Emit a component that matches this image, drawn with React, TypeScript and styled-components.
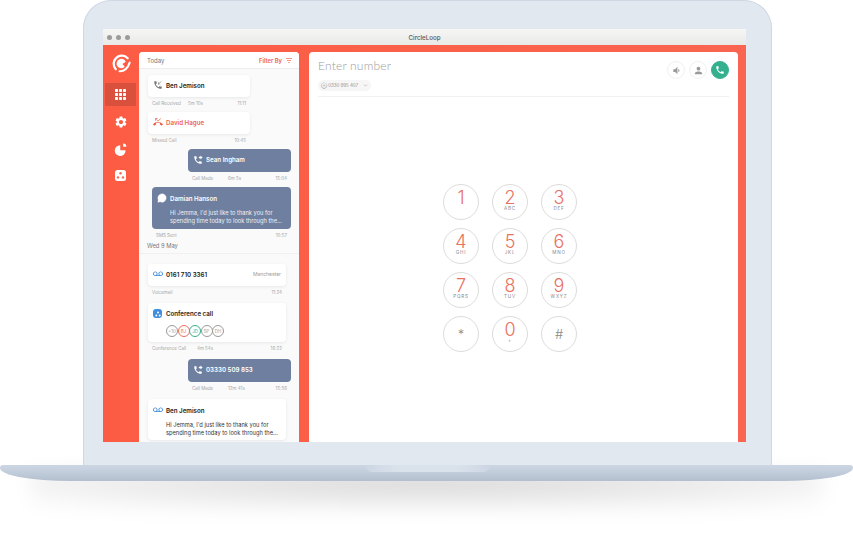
import styled, { createGlobalStyle } from "styled-components";
import { ChevronDown, MessageCircle } from "lucide-react";
import {
  MdPhone,
  MdPhoneCallback,
  MdPhoneMissed,
  MdPhoneForwarded,
  MdVoicemail,
  MdVolumeDown,
  MdPerson,
  MdSettings,
} from "react-icons/md";

const GlobalStyle = createGlobalStyle`
  html, body {
    margin: 0;
    padding: 0;
    background: #fff;
    font-family: "Inter", "Liberation Sans", sans-serif;
  }
  * { box-sizing: border-box; }
`;

const Page = styled.div`
  width: 853px;
  height: 533px;
  overflow: hidden;
  background: #fff;
  isolation: isolate;
`;

const Lid = styled.div`
  width: 689px;
  height: 465px;
  margin-left: 83px;
  padding: 28px 25px 23px 19px;
  background: #e2e8f0;
  border: 1.5px solid #cfd7e3;
  border-bottom: 0;
  border-radius: 28px 28px 0 0;
`;

const Screen = styled.div`
  height: 100%;
  display: flex;
  flex-direction: column;
`;

const TitleBar = styled.div`
  position: relative;
  height: 16px;
  flex: none;
  display: flex;
  align-items: center;
  justify-content: center;
  background: linear-gradient(#f6f6f4, #e9e9e7);
  font-size: 6.2px;
  font-weight: 500;
  color: #555;
`;

const Dots = styled.div`
  position: absolute;
  left: 4px;
  top: 6px;
  display: flex;
  gap: 4px;
`;

const Dot = styled.span`
  width: 5px;
  height: 5px;
  border-radius: 50%;
  background: #9b9b9b;
`;

const Body = styled.div`
  flex: 1;
  min-height: 0;
  display: flex;
  background: linear-gradient(90deg, #fc5c43, #f96550);
  padding-top: 7px;
`;

const Sidebar = styled.div`
  width: 36px;
  flex: none;
  display: flex;
  flex-direction: column;
  align-items: stretch;
`;

const LogoWrap = styled.div`
  height: 29px;
  padding-top: 2px;
  display: flex;
  justify-content: center;
  color: #fff;
`;

const NavItem = styled.div<{ $active?: boolean }>`
  height: 23px;
  margin: 2px 3px 2px 2px;
  display: flex;
  align-items: center;
  justify-content: center;
  background: ${(p) => (p.$active ? "#d9503c" : "transparent")};
  color: #fff;
`;

const ListPanel = styled.div`
  width: 160px;
  flex: none;
  margin-right: 10px;
  background: #fafafa;
  border-radius: 4px 4px 0 0;
  overflow: hidden;
`;

const ListHeader = styled.div`
  height: 17px;
  padding: 0 7px 0 8px;
  display: flex;
  align-items: center;
  justify-content: space-between;
  background: #fff;
  border-bottom: 1px solid #eeeeee;
  font-size: 6px;
  color: #777;
`;

const FilterBy = styled.span`
  display: flex;
  align-items: center;
  gap: 4px;
  color: #f0614c;
  font-weight: 600;
  font-size: 5.8px;
`;

const Messages = styled.div`
  padding: 6px 8px 0 9px;
`;

const Group = styled.div<{ $width: number; $right?: boolean; $gap?: number }>`
  width: ${(p) => p.$width}px;
  margin-left: ${(p) => (p.$right ? "auto" : "0")};
  margin-bottom: ${(p) => p.$gap ?? 4}px;
`;

const Card = styled.div<{ $dark?: boolean; $height: number; $tall?: boolean }>`
  height: ${(p) => p.$height}px;
  padding: ${(p) => (p.$tall ? "6px 5px 0" : "0 5px 2px")};
  display: flex;
  flex-direction: column;
  justify-content: ${(p) => (p.$tall ? "flex-start" : "center")};
  border-radius: 4px;
  background: ${(p) => (p.$dark ? "#6e7f9f" : "#fff")};
  color: ${(p) => (p.$dark ? "#fff" : "#222")};
  box-shadow: ${(p) => (p.$dark ? "none" : "0 1px 3px rgba(60, 70, 90, 0.1)")};
`;

const CardTop = styled.div`
  display: flex;
  align-items: center;
  gap: 3px;
`;

const IconSlot = styled.span<{ $color?: string }>`
  width: 10px;
  height: 10px;
  flex: none;
  display: flex;
  align-items: center;
  justify-content: center;
  color: ${(p) => p.$color ?? "currentColor"};
`;

const Name = styled.span<{ $color?: string }>`
  flex: 1;
  font-size: 6.2px;
  font-weight: 600;
  color: ${(p) => p.$color ?? "inherit"};
  white-space: nowrap;
`;

const Place = styled.span`
  font-size: 5px;
  color: #9a9a9a;
`;

const Snippet = styled.div<{ $dark?: boolean }>`
  margin-top: 6px;
  padding-left: 13px;
  font-size: 5.7px;
  line-height: 8px;
  color: ${(p) => (p.$dark ? "#eef1f6" : "#333")};
  white-space: nowrap;
`;

const Meta = styled.div`
  height: 11px;
  padding: 2px 4px 0;
  display: flex;
  align-items: center;
  font-size: 4.5px;
  color: #a5a5a5;
`;

const MetaLabel = styled.span<{ $wide?: boolean }>`
  width: ${(p) => (p.$wide ? 45 : 36)}px;
  flex: none;
  white-space: nowrap;
`;

const MetaTime = styled.span`
  margin-left: auto;
`;

const DateRow = styled.div`
  height: 14px;
  margin: 0 -8px 10px -9px;
  padding: 0 0 2px 8px;
  display: flex;
  align-items: center;
  border-bottom: 1px solid #f0f0f0;
  font-size: 5.8px;
  color: #777;
`;

const Avatars = styled.div`
  display: flex;
  margin: 7px 0 0 13px;
`;

const Avatar = styled.span<{ $color: string }>`
  width: 12px;
  height: 12px;
  margin-right: -0.5px;
  display: flex;
  align-items: center;
  justify-content: center;
  border: 0.7px solid ${(p) => p.$color};
  border-radius: 50%;
  background: #fff;
  color: ${(p) => p.$color};
  font-size: 4.4px;
`;

const ConfBadge = styled.span`
  width: 9px;
  height: 9px;
  margin-right: 1px;
  flex: none;
  border-radius: 3px;
  background: #3f8ee0;
  display: flex;
  align-items: center;
  justify-content: center;
`;

const MainPanel = styled.div`
  width: 429px;
  flex: none;
  display: flex;
  flex-direction: column;
  background: #fff;
  border-radius: 4px 4px 0 0;
`;

const MainHeader = styled.div`
  height: 45px;
  flex: none;
  margin: 0 9px;
  padding-top: 6px;
  display: flex;
  justify-content: space-between;
  border-bottom: 1px solid #f1f1f1;
`;

const NumberTitle = styled.div`
  font-family: "Lato", sans-serif;
  font-weight: 300;
  font-size: 12px;
  line-height: 16px;
  letter-spacing: 0.2px;
  color: #9c9c9c;
`;

const NumberChip = styled.div`
  width: 53px;
  height: 11px;
  margin-top: 6px;
  padding: 0 3px;
  display: flex;
  align-items: center;
  justify-content: space-between;
  border-radius: 6px;
  background: #f6f6f6;
  font-size: 4.4px;
  color: #8b8b8b;
`;

const HeaderActions = styled.div`
  display: flex;
  gap: 4px;
  margin-top: 3px;
`;

const RoundButton = styled.div<{ $green?: boolean }>`
  width: 18px;
  height: 18px;
  display: flex;
  align-items: center;
  justify-content: center;
  border-radius: 50%;
  border: 1px solid ${(p) => (p.$green ? "#35b08f" : "#f1f1f1")};
  background: ${(p) => (p.$green ? "#35b08f" : "#fff")};
  color: ${(p) => (p.$green ? "#fff" : "#9a9a9a")};
`;

const DialArea = styled.div`
  flex: 1;
  padding: 87px 27px 0 0;
  display: flex;
  justify-content: center;
`;

const DialGrid = styled.div`
  display: grid;
  grid-template-columns: repeat(3, 36px);
  grid-auto-rows: 36px;
  gap: 8px 13px;
  height: 168px;
`;

const Key = styled.div`
  display: flex;
  flex-direction: column;
  align-items: center;
  justify-content: center;
  border: 1px solid #dcdcdc;
  border-radius: 50%;
`;

const Digit = styled.span<{ $muted?: boolean }>`
  font-weight: 300;
  font-size: ${(p) => (p.$muted ? 13 : 18)}px;
  line-height: ${(p) => (p.$muted ? 13 : 17)}px;
  color: ${(p) => (p.$muted ? "#888" : "#e9705f")};
`;

const Letters = styled.span`
  height: 6px;
  margin-bottom: 3px;
  font-size: 4.6px;
  line-height: 6px;
  letter-spacing: 0.8px;
  color: #8a8a8a;
`;

const Base = styled.div`
  position: relative;
  width: 853px;
  height: 16px;
  background: linear-gradient(#ccd6e3 0%, #c2cddc 45%, #b4bfce 100%);
  border-radius: 3px 3px 70px 70px / 3px 3px 13px 13px;

  /* soft shadow the laptop throws on the page */
  &::after {
    content: "";
    position: absolute;
    z-index: -1;
    left: 30px;
    right: 30px;
    top: 6px;
    height: 38px;
    background: radial-gradient(ellipse at 50% 0, rgba(0, 0, 0, 0.17), rgba(0, 0, 0, 0.05) 72%, rgba(0, 0, 0, 0));
    filter: blur(9px);
  }
`;

const Notch = styled.div`
  position: absolute;
  left: 365px;
  top: 0;
  width: 125px;
  height: 7px;
  background: linear-gradient(90deg, #ccd6e3, #d9e1eb 25%, #d9e1eb 75%, #ccd6e3);
  border-radius: 0 0 8px 8px;
`;

const keys = [
  ["1", ""],
  ["2", "ABC"],
  ["3", "DEF"],
  ["4", "GHI"],
  ["5", "JKL"],
  ["6", "MNO"],
  ["7", "PQRS"],
  ["8", "TUV"],
  ["9", "WXYZ"],
];

const people = [
  { label: "+10", color: "#9a9a9a" },
  { label: "BJ", color: "#e9705f" },
  { label: "JD", color: "#35b08f" },
  { label: "SP", color: "#9a9a9a" },
  { label: "DH", color: "#9a9a9a" },
];

const Logo = () => (
  <svg width="19" height="19" viewBox="0 0 20 20" fill="none" stroke="#fff" strokeLinecap="round">
    <path d="M16.5 4.5A8.4 8.4 0 1 0 4 16" strokeWidth="2.4" />
    <path d="M8 18.2C12.5 18.5 17 15 18.6 9" strokeWidth="2.2" />
    <path d="M14.5 8.2A5 5 0 1 0 13.5 13.5L11 10.5z" fill="#fff" stroke="none" />
  </svg>
);

const GridIcon = () => (
  <svg width="11" height="11" viewBox="0 0 11 11" fill="#fff">
    {[0, 4, 8].map((y) =>
      [0, 4, 8].map((x) => <rect key={`${x}-${y}`} x={x} y={y} width="3" height="3" rx="0.8" />),
    )}
  </svg>
);

const PieIcon = () => (
  <svg width="14" height="14" viewBox="0 0 13 13" fill="#fff">
    <path d="M5.8 3v4.6h4.9A5 5 0 1 1 5.8 3z" />
    <path d="M8.5 1.5a3 3 0 0 1 3 3h-3z" />
  </svg>
);

const DiceIcon = () => (
  <svg width="11" height="11" viewBox="0 0 11 11">
    <rect width="11" height="11" rx="2.5" fill="#fff" />
    <circle cx="5.5" cy="3.2" r="1.2" fill="#f96550" />
    <circle cx="3" cy="7.4" r="1.2" fill="#f96550" />
    <circle cx="8" cy="7.4" r="1.2" fill="#f96550" />
  </svg>
);

const FilterIcon = () => (
  <svg width="6" height="5" viewBox="0 0 6 5" stroke="#f0614c" strokeWidth="0.7">
    <path d="M0 .5h6M1 2.5h4M2.2 4.5h1.6" />
  </svg>
);

export default function App() {
  return (
    <Page>
      <GlobalStyle />
      <Lid>
        <Screen>
          <TitleBar>
            <Dots>
              <Dot />
              <Dot />
              <Dot />
            </Dots>
            CircleLoop
          </TitleBar>
          <Body>
            <Sidebar>
              <LogoWrap>
                <Logo />
              </LogoWrap>
              <NavItem $active>
                <GridIcon />
              </NavItem>
              <NavItem>
                <MdSettings size={14} />
              </NavItem>
              <NavItem>
                <PieIcon />
              </NavItem>
              <NavItem>
                <DiceIcon />
              </NavItem>
            </Sidebar>

            <ListPanel>
              <ListHeader>
                Today
                <FilterBy>
                  Filter By <FilterIcon />
                </FilterBy>
              </ListHeader>
              <Messages>
                <Group $width={102}>
                  <Card $height={22}>
                    <CardTop>
                      <IconSlot $color="#777">
                        <MdPhoneCallback size={10} />
                      </IconSlot>
                      <Name>Ben Jemison</Name>
                    </CardTop>
                  </Card>
                  <Meta>
                    <MetaLabel>Call Received</MetaLabel>5m 10s<MetaTime>11:11</MetaTime>
                  </Meta>
                </Group>
                <Group $width={102}>
                  <Card $height={22}>
                    <CardTop>
                      <IconSlot $color="#f0614c">
                        <MdPhoneMissed size={10} />
                      </IconSlot>
                      <Name $color="#ee6552">David Hague</Name>
                    </CardTop>
                  </Card>
                  <Meta>
                    <MetaLabel>Missed Call</MetaLabel>
                    <MetaTime>10:45</MetaTime>
                  </Meta>
                </Group>
                <Group $width={103} $right>
                  <Card $height={23} $dark>
                    <CardTop>
                      <IconSlot>
                        <MdPhoneForwarded size={10} />
                      </IconSlot>
                      <Name>Sean Ingham</Name>
                    </CardTop>
                  </Card>
                  <Meta>
                    <MetaLabel>Call Made</MetaLabel>6m 5s<MetaTime>15:04</MetaTime>
                  </Meta>
                </Group>
                <Group $width={139} $right $gap={0}>
                  <Card $height={42} $dark $tall>
                    <CardTop>
                      <IconSlot>
                        <MessageCircle size={10} fill="#fff" strokeWidth={1} />
                      </IconSlot>
                      <Name>Damian Hanson</Name>
                    </CardTop>
                    <Snippet $dark>
                      Hi Jemma, I'd just like to thank you for
                      <br />
                      spending time today to look through the...
                    </Snippet>
                  </Card>
                  <Meta>
                    <MetaLabel>SMS Sent</MetaLabel>
                    <MetaTime>10:57</MetaTime>
                  </Meta>
                </Group>
                <DateRow>Wed 9 May</DateRow>
                <Group $width={138} $gap={6}>
                  <Card $height={22}>
                    <CardTop>
                      <IconSlot $color="#3f8ee0">
                        <MdVoicemail size={10} />
                      </IconSlot>
                      <Name>0161 710 3361</Name>
                      <Place>Manchester</Place>
                    </CardTop>
                  </Card>
                  <Meta>
                    <MetaLabel>Voicemail</MetaLabel>
                    <MetaTime>11:24</MetaTime>
                  </Meta>
                </Group>
                <Group $width={138} $gap={6}>
                  <Card $height={39} $tall>
                    <CardTop>
                      <ConfBadge>
                        <svg width="6" height="6" viewBox="0 0 6 6" fill="#fff">
                          <circle cx="3" cy="1.4" r="1" />
                          <circle cx="1.3" cy="4.4" r="1" />
                          <circle cx="4.7" cy="4.4" r="1" />
                        </svg>
                      </ConfBadge>
                      <Name>Conference call</Name>
                    </CardTop>
                    <Avatars>
                      {people.map((person) => (
                        <Avatar key={person.label} $color={person.color}>
                          {person.label}
                        </Avatar>
                      ))}
                    </Avatars>
                  </Card>
                  <Meta>
                    <MetaLabel $wide>Conference Call</MetaLabel>4m 54s
                    <MetaTime>16:22</MetaTime>
                  </Meta>
                </Group>
                <Group $width={103} $right $gap={6}>
                  <Card $height={23} $dark>
                    <CardTop>
                      <IconSlot>
                        <MdPhoneForwarded size={10} />
                      </IconSlot>
                      <Name>03330 509 853</Name>
                    </CardTop>
                  </Card>
                  <Meta>
                    <MetaLabel>Call Made</MetaLabel>12m 41s<MetaTime>15:56</MetaTime>
                  </Meta>
                </Group>
                <Group $width={138}>
                  <Card $height={41} $tall>
                    <CardTop>
                      <IconSlot $color="#3f8ee0">
                        <MdVoicemail size={10} />
                      </IconSlot>
                      <Name>Ben Jemison</Name>
                    </CardTop>
                    <Snippet>
                      Hi Jemma, I'd just like to thank you for
                      <br />
                      spending time today to look through the...
                    </Snippet>
                  </Card>
                </Group>
              </Messages>
            </ListPanel>

            <MainPanel>
              <MainHeader>
                <div>
                  <NumberTitle>Enter number</NumberTitle>
                  <NumberChip>
                    ⊕ 0330 995 407
                    <ChevronDown size={5} />
                  </NumberChip>
                </div>
                <HeaderActions>
                  <RoundButton>
                    <MdVolumeDown size={11} />
                  </RoundButton>
                  <RoundButton>
                    <MdPerson size={11} />
                  </RoundButton>
                  <RoundButton $green>
                    <MdPhone size={10} />
                  </RoundButton>
                </HeaderActions>
              </MainHeader>
              <DialArea>
                <DialGrid>
                  {keys.map(([digit, letters]) => (
                    <Key key={digit}>
                      <Digit>{digit}</Digit>
                      <Letters>{letters}</Letters>
                    </Key>
                  ))}
                  <Key>
                    <Digit $muted>*</Digit>
                  </Key>
                  <Key>
                    <Digit>0</Digit>
                    <Letters>+</Letters>
                  </Key>
                  <Key>
                    <Digit $muted>#</Digit>
                  </Key>
                </DialGrid>
              </DialArea>
            </MainPanel>
          </Body>
        </Screen>
      </Lid>
      <Base>
        <Notch />
      </Base>
    </Page>
  );
}
